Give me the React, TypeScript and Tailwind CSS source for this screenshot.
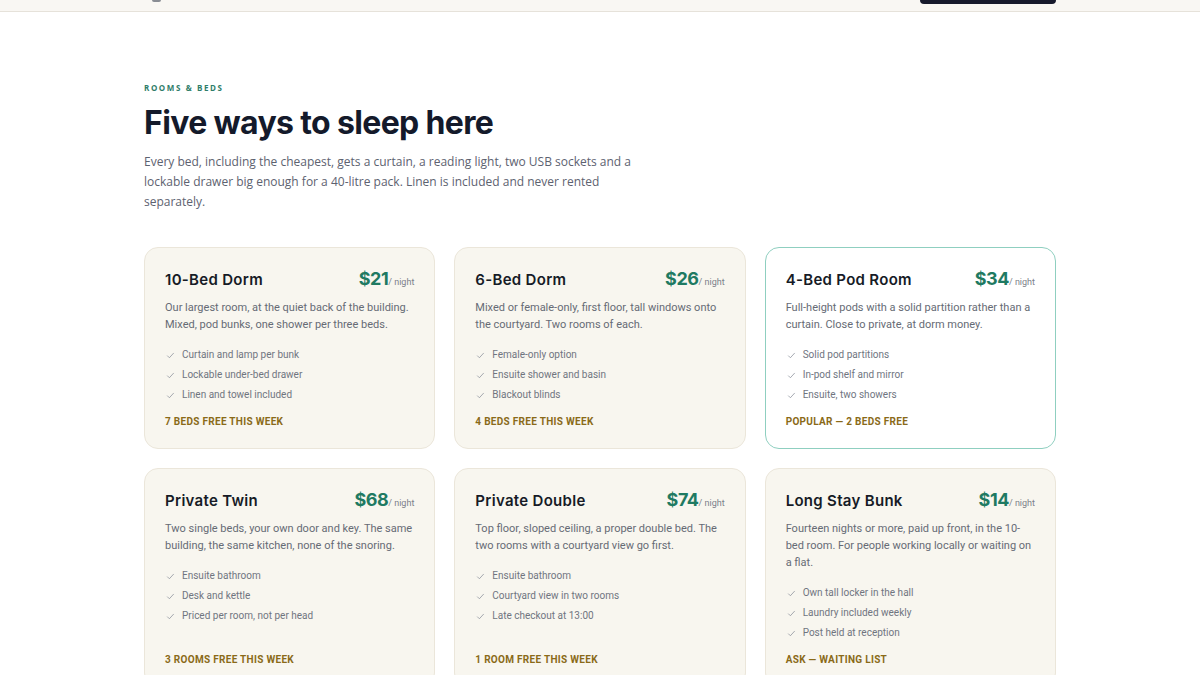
import React from "react";

interface Room {
  name: string;
  price: number;
  blurb: string;
  features: string[];
  note: string;
  featured?: boolean;
}

const rooms: Room[] = [
  {
    name: "10-Bed Dorm",
    price: 21,
    blurb:
      "Our largest room, at the quiet back of the building. Mixed, pod bunks, one shower per three beds.",
    features: [
      "Curtain and lamp per bunk",
      "Lockable under-bed drawer",
      "Linen and towel included",
    ],
    note: "7 beds free this week",
  },
  {
    name: "6-Bed Dorm",
    price: 26,
    blurb:
      "Mixed or female-only, first floor, tall windows onto the courtyard. Two rooms of each.",
    features: ["Female-only option", "Ensuite shower and basin", "Blackout blinds"],
    note: "4 beds free this week",
  },
  {
    name: "4-Bed Pod Room",
    price: 34,
    blurb:
      "Full-height pods with a solid partition rather than a curtain. Close to private, at dorm money.",
    features: ["Solid pod partitions", "In-pod shelf and mirror", "Ensuite, two showers"],
    note: "Popular — 2 beds free",
    featured: true,
  },
  {
    name: "Private Twin",
    price: 68,
    blurb:
      "Two single beds, your own door and key. The same building, the same kitchen, none of the snoring.",
    features: ["Ensuite bathroom", "Desk and kettle", "Priced per room, not per head"],
    note: "3 rooms free this week",
  },
  {
    name: "Private Double",
    price: 74,
    blurb:
      "Top floor, sloped ceiling, a proper double bed. The two rooms with a courtyard view go first.",
    features: ["Ensuite bathroom", "Courtyard view in two rooms", "Late checkout at 13:00"],
    note: "1 room free this week",
  },
  {
    name: "Long Stay Bunk",
    price: 14,
    blurb:
      "Fourteen nights or more, paid up front, in the 10-bed room. For people working locally or waiting on a flat.",
    features: ["Own tall locker in the hall", "Laundry included weekly", "Post held at reception"],
    note: "Ask — waiting list",
  },
];

const Check = () => (
  <svg
    width="9"
    height="9"
    viewBox="0 0 24 24"
    fill="none"
    stroke="currentColor"
    strokeWidth="2"
    strokeLinecap="round"
    strokeLinejoin="round"
    className="text-[#8a8f99] shrink-0"
  >
    <polyline points="4 13 9 18 20 6" />
  </svg>
);

const RoomCard: React.FC<{ room: Room }> = ({ room }) => (
  <div
    className={`flex flex-col rounded-[14px] border px-5 pt-[17px] pb-[19px] font-['Roboto',sans-serif] ${
      room.featured
        ? "bg-white border-[#8fcfc0]"
        : "bg-[#f8f6ef] border-[#ebe6da]"
    }`}
  >
    {/* Title + price */}
    <div className="flex items-baseline justify-between">
      <h3 className="font-['Inter',sans-serif] text-[15px] font-semibold tracking-[0.02em] text-[#161b26]">
        {room.name}
      </h3>
      <div className="flex items-baseline">
        <span className="font-['Inter',sans-serif] text-[18px] font-bold text-[#1f7a62] tracking-tight">
          ${room.price}
        </span>
        <span className="text-[9px] text-[#7b808a]">/ night</span>
      </div>
    </div>

    <p className="mt-[7px] text-[11px] leading-[17px] text-[#666b75]">
      {room.blurb}
    </p>

    <ul className="mt-[15px] flex flex-col gap-[6px]">
      {room.features.map((f) => (
        <li
          key={f}
          className="flex items-center gap-[7px] pl-[1px] text-[10px] leading-[14px] text-[#70757f]"
        >
          <Check />
          {f}
        </li>
      ))}
    </ul>

    <div className="mt-auto pt-[12px] text-[10px] font-bold uppercase tracking-[0.03em] text-[#8a6a18]">
      {room.note}
    </div>
  </div>
);

export default function App() {
  return (
    <div className="min-h-screen bg-white font-['Open_Sans','Liberation_Sans',sans-serif]">
      {/* Top nav (scrolled off) */}
      <header className="h-[12px] overflow-hidden border-b border-[#e6e2da] bg-[#f9f7f3]">
        <div className="mx-auto flex w-[912px] items-start justify-between">
          <div className="ml-[8px] h-[2px] w-[9px] rounded-b bg-[#8a8d94]" />
          <div className="h-[4px] w-[136px] rounded-b-[8px] bg-[#171a2c]" />
        </div>
      </header>

      <main className="mx-auto w-[912px] pt-[70px]">
        <div className="text-[8px] font-bold uppercase tracking-[0.2em] text-[#2f7d69]">
          Rooms &amp; Beds
        </div>
        <h1 className="mt-[9px] font-['Inter',sans-serif] text-[32px] font-bold leading-[40px] tracking-[-0.02em] text-[#141a2b]">
          Five ways to sleep here
        </h1>
        <p className="mt-[9px] max-w-[500px] text-[12px] leading-[20px] text-[#5d6270]">
          Every bed, including the cheapest, gets a curtain, a reading light,
          two USB sockets and a lockable drawer big enough for a 40-litre pack.
          Linen is included and never rented separately.
        </p>

        <div className="mt-[35px] grid grid-cols-3 gap-x-[19px] gap-y-[19px] pb-10">
          {rooms.map((r) => (
            <RoomCard key={r.name} room={r} />
          ))}
        </div>
      </main>
    </div>
  );
}
